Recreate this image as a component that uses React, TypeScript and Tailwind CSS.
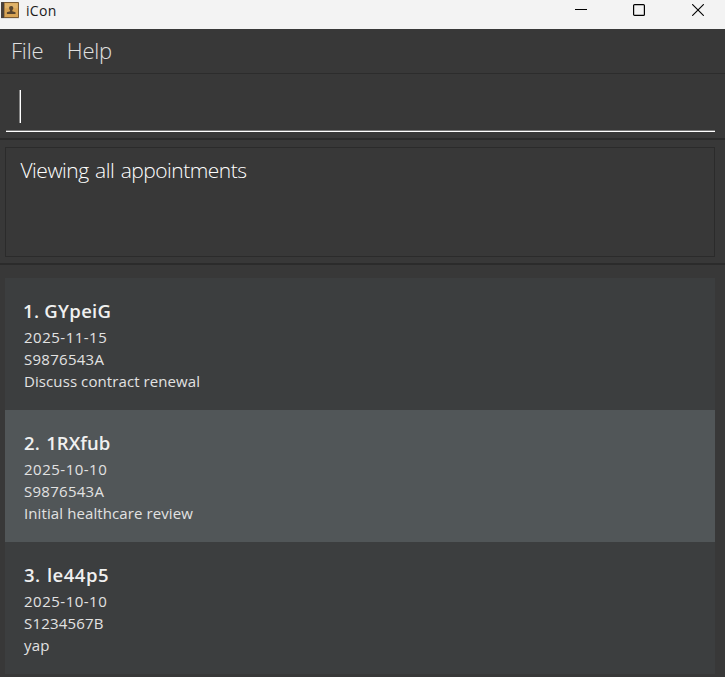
import React from "react";

type Appointment = { title: string; titleClass: string; lines: { text: string; cls: string }[]; selected?: boolean };

const appointments: Appointment[] = [
  {
    title: "1. GYpeiG",
    titleClass: "-ml-px tracking-[0.3px]",
    lines: [
      { text: "2025-11-15", cls: "tracking-[0.5px]" },
      { text: "S9876543A", cls: "tracking-[0.27px]" },
      { text: "Discuss contract renewal", cls: "tracking-[0.09px]" },
    ],
  },
  {
    title: "2. 1RXfub",
    titleClass: "tracking-[0.05px] [word-spacing:1.600px]",
    selected: true,
    lines: [
      { text: "2025-10-10", cls: "tracking-[0.5px]" },
      { text: "S9876543A", cls: "tracking-[0.27px]" },
      { text: "Initial healthcare review", cls: "tracking-[0.1px]" },
    ],
  },
  {
    title: "3. le44p5",
    titleClass: "tracking-[0.5px] [word-spacing:1px]",
    lines: [
      { text: "2025-10-10", cls: "tracking-[0.5px]" },
      { text: "S1234567B", cls: "tracking-[0.2px]" },
      { text: "yap", cls: "tracking-[0.15px]" },
    ],
  },
];

function BookIcon() {
  return (
    <svg width="20" height="20" viewBox="0 0 20 20" className="shrink-0">
      <rect x="1" y="17" width="18" height="1.600" fill="#d3d3d3" />
      <rect x="1" y="2" width="18" height="16" rx="0.800" fill="#7a5a33" />
      <rect x="1" y="2" width="3" height="16" rx="0.600" fill="#49413b" />
      <rect x="4.500" y="3" width="13.500" height="14" fill="#d8a455" />
      <rect x="5" y="3.300" width="12.500" height="5" fill="#e0b36a" />
      <path d="M11.200 6c1.400 0 2.100.900 2.100 2.100 0 1-.5 1.700-1 2.300v.8l3.200 1.100v1.700H6.900v-1.700l3.200-1.100v-.8c-.6-.6-1-1.300-1-2.300C9.100 6.900 9.800 6 11.200 6z" fill="#58452f" />
    </svg>
  );
}

function TitleBar() {
  return (
    <header className="flex h-[29px] items-start bg-[#f3f3f3] text-[#1a1a1a]">
      <BookIcon />
      <span className="ml-1.5 mt-0.5 text-[14px] leading-[18px] tracking-[0.3px]">iCon</span>
      <div className="ml-auto flex pr-[21px] pt-1">
        <svg width="12" height="12" viewBox="0 0 12 12" className="mr-[46px]"><path d="M0 5.500h12" stroke="#000" /></svg>
        <svg width="12" height="12" viewBox="0 0 12 12" className="mr-[47px]"><rect x="0.600" y="0.600" width="10.800" height="10.800" rx="1" fill="none" stroke="#000" strokeWidth="1.200" /></svg>
        <svg width="12" height="12" viewBox="0 0 12 12"><path d="M.2.2l11.600 11.600M11.800.2L.2 11.800" stroke="#000" strokeWidth="1.100" /></svg>
      </div>
    </header>
  );
}

export default function App() {
  return (
    <div className="flex h-[677px] w-[725px] flex-col overflow-hidden bg-[#383838] font-['Open_Sans','Noto_Sans',sans-serif]">
      <TitleBar />
      <nav className="flex h-[45px] items-center gap-[23.500px] border-b border-[#2c2c2c] pb-0.5 pl-[11px] text-[22px] font-light text-[#e0e0e0]">
        <span className="tracking-[-0.2px]">File</span>
        <span className="tracking-[-0.2px]">Help</span>
      </nav>
      <div className="flex h-[66px] flex-col border-b-2 border-[#2b2b2b] pl-1.5 pr-2.5">
        <div className="ml-[13px] mt-4 h-[33px] w-0.5 border-l border-[#888] bg-white" />
        <div className="mt-[7px] h-0.5 border-t border-[#787878] bg-white" />
      </div>
      <section className="h-[125px] border-b-2 border-[#2b2b2b] pl-[5px] pr-2.5 pt-[7px]">
        <div className="h-[110px] border border-[#2b2b2b] pl-[14.500px] pt-[7px] text-[21px] font-light leading-[30px] tracking-[-0.500px] text-white [word-spacing:1.500px]">
          <span>Viewing all appointments</span>
        </div>
      </section>
      <main className="pl-[5px] pr-2.5 pt-[13px]">
        {appointments.map((a) => (
          <article key={a.title} className={a.selected ? "h-[132px] bg-[#515658] pl-[19px] pt-[19px]" : "h-[132px] bg-[#3c3e3f] pl-[19px] pt-[19px]"}>
            <h2 className="mb-px text-[18.500px] font-semibold leading-[28px] text-[#f0f0f0]"><span className={a.titleClass}>{a.title}</span></h2>
            {a.lines.map((l) => (
              <p key={l.text} className="text-[15px] leading-[22px] text-[#e2e2e2]"><span className={l.cls}>{l.text}</span></p>
            ))}
          </article>
        ))}
      </main>
    </div>
  );
}
